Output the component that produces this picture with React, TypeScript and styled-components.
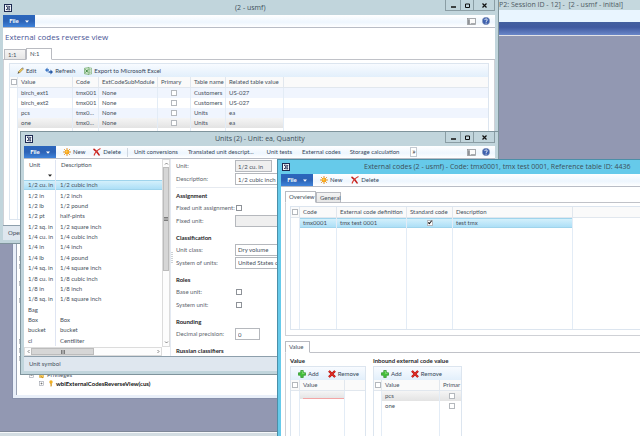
import React from "react";
import styled, { createGlobalStyle, css } from "styled-components";

const GlobalStyle = createGlobalStyle`
  *, *::before, *::after { box-sizing: border-box; }
  body { margin: 0; overflow: hidden; }
  body, button, input, select, table {
    font-family: Lato, "Open Sans", sans-serif;
    font-size: 6px;
    line-height: 10px;
    color: #47505c;
  }
  button, input, select { margin: 0; padding: 0; border: 0; background: none; border-radius: 0; }
  svg { display: block; flex: none; }
`;

const titleFont = css`
  font-family: "Open Sans", Lato, sans-serif;
  font-weight: 400;
`;

/* ---------- desktop ---------- */

const Desktop = styled.main`
  position: relative;
  display: flex;
  flex-direction: column;
  min-height: 100vh;
  overflow: hidden;
  background: #9298b2;
`;

const ShellTitle = styled.header`
  ${titleFont}
  height: 10px;
  padding-right: 17px;
  text-align: right;
  font-size: 7px;
  white-space: pre;
  color: #4c5a63;
  background: #c5d8de;
`;
const ShellAddress = styled.div`
  height: 12px;
  background: #e9f5ff;
`;
const ShellBand = styled.div`
  height: 14px;
  background: linear-gradient(#44609f, #415aa0 40%, #6a87c8);
  border-bottom: 1px solid #e3e3e6;
`;
const ShellSpace = styled.div`
  flex: 1;
`;
const ShellStatus = styled.footer`
  height: 5px;
  border-top: 1px solid #7e8798;
  background: linear-gradient(#f6f8fa, #f6f8fa 1px, #d3dde2 1px);
`;

/* ---------- windows ---------- */

type Place = { $left: number; $top: number; $width?: number; $height?: number };

const Frame = styled.section<Place & { $active?: boolean }>`
  position: absolute;
  left: ${(p) => p.$left}px;
  top: ${(p) => p.$top}px;
  ${(p) => (p.$width ? `width: ${p.$width}px;` : "right: -12px;")}
  ${(p) => (p.$height ? `height: ${p.$height}px;` : "bottom: -4px;")}
  display: flex;
  flex-direction: column;
  padding: 0 3px 3px;
  border: 1px solid ${(p) => (p.$active ? "#4b8fa8" : "#7f949c")};
  background: ${(p) => (p.$active ? "#66caea" : "#c1d5dc")};
`;

const Caption = styled.header<{ $height: number }>`
  display: flex;
  align-items: center;
  flex: none;
  height: ${(p) => p.$height}px;
  padding-left: 1px;
`;
const CaptionText = styled.h1<{ $start: number }>`
  ${titleFont}
  flex: 1;
  margin: 0;
  padding-left: ${(p) => p.$start}px;
  font-size: 7px;
  white-space: nowrap;
  color: #3d4f59;
`;
const CaptionButtons = styled.div`
  display: flex;
  align-self: flex-start;
  height: 11px;
  border: 1px solid #8a9da4;
  border-top: 0;
`;
const CaptionButton = styled.button<{ $width: number }>`
  display: flex;
  align-items: center;
  justify-content: center;
  width: ${(p) => p.$width}px;
  & + & {
    border-left: 1px solid #8a9da4;
  }
`;

const Client = styled.div`
  display: flex;
  flex-direction: column;
  flex: 1;
  min-height: 0;
  overflow: hidden;
  background: #fff;
`;

const MenuBar = styled.nav`
  display: flex;
  align-items: center;
  flex: none;
  height: 13px;
  padding-right: 5px;
  border-bottom: 1px solid #b9bdc6;
  background: linear-gradient(#fff, #eef6fe 60%, #fff);
`;
const FileButton = styled.button`
  display: flex;
  align-items: center;
  justify-content: center;
  gap: 6px;
  width: 32px;
  height: 12px;
  font-weight: 700;
  color: #fff;
  background: linear-gradient(#2b66bd, #2c63b6 50%, #3f83da);
`;
const Command = styled.button<{ $start: number }>`
  display: flex;
  align-items: center;
  gap: 2px;
  margin-left: ${(p) => p.$start}px;
  white-space: nowrap;
  color: #35465a;
`;
const Divider = styled.span`
  width: 1px;
  height: 9px;
  margin-left: 6px;
  background: #ced6e0;
`;
const Overflow = styled.button`
  display: flex;
  justify-content: center;
  width: 7px;
  height: 10px;
  margin-left: 11px;
  font-size: 8px;
  line-height: 6px;
  color: #222;
  border: 1px solid #c4cad2;
  background: #fff;
`;
const MenuEnd = styled.div`
  display: flex;
  align-items: center;
  gap: 6px;
  margin-left: auto;
`;

const StatusBar = styled.footer`
  flex: none;
  height: 15px;
  padding: 2px 5px;
  border-top: 1px solid #8d9fac;
  background: #dfe7ef;
`;

/* ---------- tabs ---------- */

const Heading = styled.h2`
  ${titleFont}
  flex: none;
  height: 20px;
  margin: 0;
  padding: 3px 2px;
  font-size: 8px;
  line-height: 12px;
  color: #4b5596;
`;
const TabList = styled.div<{ $inset?: number }>`
  display: flex;
  align-items: flex-end;
  flex: none;
  height: 12px;
  padding-left: ${(p) => p.$inset ?? 0}px;
  box-shadow: inset 0 -1px #c0c2c8;
`;
const Tab = styled.button<{ $on?: boolean; $width: number }>`
  width: ${(p) => p.$width}px;
  height: ${(p) => (p.$on ? 12 : 11)}px;
  padding-left: 3px;
  text-align: left;
  border: 1px solid #b9bbc1;
  ${(p) =>
    p.$on
      ? css`
          border-bottom-color: #fff;
          background: #fff;
        `
      : css`
          background: linear-gradient(#f4f4f4, #e6e6e6);
        `}
`;
const TabPanel = styled.div<{ $pad: string; $grow?: boolean; $closed?: boolean }>`
  display: flex;
  flex-direction: column;
  flex: ${(p) => (p.$grow ? "1" : "none")};
  min-height: 0;
  padding: ${(p) => p.$pad};
  border: 1px solid #cfd1d6;
  border-top: 0;
  border-bottom-width: ${(p) => (p.$closed ? 1 : 0)}px;
  overflow: hidden;
`;

/* ---------- data grids ---------- */

const ActionBar = styled.div<{ $pad: number; $gap: number }>`
  display: flex;
  align-items: center;
  flex: none;
  gap: ${(p) => p.$gap}px;
  height: 13px;
  padding-left: ${(p) => p.$pad}px;
  background: linear-gradient(#f8fbff, #e2effb);
`;
const Action = styled.button`
  display: flex;
  align-items: center;
  gap: 2px;
  white-space: nowrap;
  color: #35465a;
`;
const GridBox = styled.div`
  flex: none;
  border: 1px solid #dce5ef;
  overflow: hidden;
`;
const Table = styled.table<{ $height?: number }>`
  width: 100%;
  ${(p) => p.$height && `height: ${p.$height}px;`}
  table-layout: fixed;
  border-spacing: 0;
  border-collapse: separate;
`;
const Col = styled.col<{ $w?: number }>`
  ${(p) => p.$w && `width: ${p.$w}px;`}
`;
const Th = styled.th`
  height: 10px;
  padding: 0 0 0 3px;
  text-align: left;
  font-weight: 400;
  white-space: nowrap;
  overflow: hidden;
  border-right: 1px solid #e1e7ee;
  border-bottom: 1px solid #e1e7ee;
  background: #fafafa;
  &:last-child {
    border-right: 0;
  }
`;
const Td = styled.td<{ $tone?: "blue" | "grey" | "tint"; $center?: boolean }>`
  padding: 0 0 0 ${(p) => (p.$center ? 0 : 3)}px;
  text-align: ${(p) => (p.$center ? "center" : "left")};
  white-space: nowrap;
  overflow: hidden;
  text-overflow: ellipsis;
  border-right: 1px solid #e3ecf6;
  &:last-child {
    border-right: 0;
  }
  ${(p) => p.$tone === "tint" && "background: #f0f5fe;"}
  ${(p) => p.$tone === "grey" && "background: linear-gradient(#f5f5f5, #e3e3e3);"}
  ${(p) =>
    p.$tone === "blue" &&
    "background: linear-gradient(#d8f2fc, #a8ddf6); box-shadow: inset 0 1px #9fd4ec, inset 0 -1px #9fd4ec;"}
`;
const Rest = styled(Td)<{ $h: number }>`
  height: ${(p) => p.$h}px;
`;
const Check = styled.input.attrs({ type: "checkbox" })`
  appearance: none;
  display: block;
  width: 6px;
  height: 6px;
  margin: 0 auto;
  border: 1px solid #b4b8bd;
  background: #fff;
  &:checked {
    position: relative;
  }
  &:checked::after {
    content: "";
    position: absolute;
    left: 1px;
    top: -1px;
    width: 2px;
    height: 4px;
    border: solid #111;
    border-width: 0 1px 1px 0;
    transform: rotate(40deg);
  }
`;
const CheckTh = styled(Th)`
  padding: 0 1px;
`;
const CellInput = styled.input`
  display: block;
  width: 41px;
  height: 8px;
  border-bottom: 1px solid #f3a5a5;
`;

/* ---------- units window ---------- */

const Split = styled.div`
  display: flex;
  flex: 1;
  min-height: 0;
`;
const ListPane = styled.div`
  display: grid;
  grid-template-columns: 138px 8px;
  grid-template-rows: 1fr 9px;
  overflow: hidden;
`;
const ListArea = styled.div`
  padding-top: 1px;
  overflow: hidden;
`;
const ListTable = styled(Table)`
  th {
    padding-left: 5px;
    background: #fff;
    border-bottom: 0;
  }
  td,
  th {
    border-color: #dfe5f2;
  }
  td {
    padding-left: 4px;
  }
`;
const FilterTd = styled(Td)`
  height: 10px;
  button {
    display: block;
    margin-left: 20px;
  }
`;
const Scroll = styled.div<{ $across?: boolean }>`
  display: flex;
  flex-direction: ${(p) => (p.$across ? "row" : "column")};
  border: 1px solid #dcdcdc;
  background: #fdfdfd;
`;
const ScrollButton = styled.button`
  display: flex;
  align-items: center;
  justify-content: center;
  flex: none;
  min-width: 6px;
  min-height: 7px;
`;
const Thumb = styled.div<{ $share: number }>`
  display: flex;
  align-items: center;
  justify-content: center;
  flex: ${(p) => p.$share};
  border: 1px solid #bcbcbc;
  background: #d6d6d6;
`;
const Track = styled.div<{ $share: number }>`
  flex: ${(p) => p.$share};
`;
const Splitter = styled.div`
  display: flex;
  align-items: center;
  width: 3px;
  border-left: 1px solid #e3e9f2;
`;
const Form = styled.form`
  display: flex;
  flex-direction: column;
  flex: 1;
  gap: 1px;
  padding: 1px 3px 0;
  overflow: hidden;
`;
const FormRow = styled.div`
  display: grid;
  grid-template-columns: 59px auto;
  justify-content: start;
  align-items: center;
  height: 12px;
  flex: none;
  white-space: nowrap;
  color: #5e656e;
  input[type="checkbox"] {
    margin: 0 1px;
    border-color: #8e9298;
  }
`;
const Rule = styled.hr`
  flex: none;
  width: 100%;
  height: 1px;
  margin: 1px 0 0;
  border: 0;
  background: #e6eaf0;
`;
const FormTitle = styled.h3<{ $first?: boolean }>`
  flex: none;
  margin: ${(p) => (p.$first ? 2 : 5)}px 0 0;
  font-size: 6px;
  font-weight: 700;
  line-height: 10px;
  color: #1e1e28;
`;
const fieldLook = css<{ $w: number; $off?: boolean }>`
  width: ${(p) => p.$w}px;
  height: 12px;
  padding: 0 2px;
  border: 1px solid #b5b8bd;
  background: ${(p) => (p.$off ? "#efefef" : "#fff")};
`;
const Field = styled.input<{ $w: number; $off?: boolean }>`
  ${fieldLook}
`;
const Choice = styled.select<{ $w: number; $off?: boolean }>`
  appearance: none;
  ${fieldLook}
`;

/* ---------- codes window ---------- */

const CodesBody = styled.div`
  display: flex;
  flex-direction: column;
  flex: 1;
  min-height: 0;
  padding: 4px 0 0 4px;
`;
const ValueTabs = styled.div`
  display: flex;
  flex-direction: column;
  flex: 1;
  margin-top: 5px;
`;
const Columns = styled.div`
  display: flex;
  gap: 7px;
`;
const ValueTitle = styled.h3`
  margin: 0;
  font-size: 6px;
  font-weight: 700;
  line-height: 10px;
  white-space: nowrap;
  color: #1e1e28;
`;
const ValueGroup = styled.section<{ $w: number }>`
  width: ${(p) => p.$w}px;
`;

/* ---------- object tree ---------- */

const TreeFrame = styled.section<Place>`
  position: absolute;
  left: ${(p) => p.$left}px;
  top: ${(p) => p.$top}px;
  width: ${(p) => p.$width}px;
  height: ${(p) => p.$height}px;
  display: flex;
  padding: 3px;
  border: 1px solid #8790ab;
  background: #e9eff9;
`;
const Tree = styled.ul`
  display: flex;
  flex-direction: column;
  flex: 1;
  margin: 0;
  padding: 28px 0 7px 2px;
  list-style: none;
  background: #fff;
  border-left: 1px solid #9aa3b5;
`;
const TreeRow = styled.li<{ $depth: number; $bold?: boolean }>`
  display: flex;
  align-items: center;
  gap: 5px;
  flex: 1;
  min-height: 0;
  padding-left: ${(p) => p.$depth * 10}px;
  line-height: 8px;
  font-weight: ${(p) => (p.$bold ? 700 : 400)};
  color: ${(p) => (p.$bold ? "#111" : "#47505c")};
`;
const TreeLabel = styled.span`
  display: flex;
  align-items: center;
  gap: 3px;
`;

/* ---------- icons ---------- */

const AppIcon = () => (
  <svg width="8" height="8" viewBox="0 0 16 16">
    <rect x="1" y="1" width="14" height="14" fill="#f3f6fa" stroke="#1d2a52" strokeWidth="2" />
    <path d="M4 4l8 1-3 3 3 4-7-1M4 4l4 4-4 4M9 8h3" fill="none" stroke="#1d2a52" strokeWidth="1.6" />
  </svg>
);
const SunIcon = () => (
  <svg width="8" height="8" viewBox="0 0 16 16">
    <path d="M8 0v16M0 8h16M2.3 2.3l11.4 11.4M13.7 2.3L2.3 13.7" stroke="#e08a1e" strokeWidth="1.8" />
    <circle cx="8" cy="8" r="4.6" fill="#f8a81c" />
    <circle cx="7" cy="7" r="2" fill="#fbcb5a" />
  </svg>
);
const DeleteIcon = () => (
  <svg width="8" height="8" viewBox="0 0 16 16">
    <path d="M1 2c5 3 9 7 12 13" stroke="#c3201c" strokeWidth="3" fill="none" />
    <path d="M15 1C9 4 4 9 2 15" stroke="#d9362d" strokeWidth="2.2" fill="none" />
  </svg>
);
const RemoveIcon = () => (
  <svg width="8" height="8" viewBox="0 0 16 16">
    <path d="M2 2l12 12M14 2L2 14" stroke="#9d1512" strokeWidth="4.6" />
    <path d="M2 2l12 12M14 2L2 14" stroke="#e02a24" strokeWidth="3" />
  </svg>
);
const AddIcon = () => (
  <svg width="8" height="8" viewBox="0 0 16 16">
    <path d="M5.5 1h5v4.5H15v5h-4.5V15h-5v-4.5H1v-5h4.5z" fill="#46c23c" stroke="#2a8f26" strokeWidth="1.4" />
    <path d="M7 3h2v4h4" fill="none" stroke="#9be88f" strokeWidth="1.2" />
  </svg>
);
const PencilIcon = () => (
  <svg width="7" height="7" viewBox="0 0 14 14">
    <path d="M2.5 9.5L10 2l2.4 2.4L5 12z" fill="#e9c458" stroke="#94762c" />
    <path d="M2.5 9.5L1 13.5 5 12z" fill="#4a4335" />
    <path d="M10 2l1.5-1.500 2 2-1.100 1.900z" fill="#8a8f98" />
  </svg>
);
const RefreshIcon = () => (
  <svg width="8" height="8" viewBox="0 0 16 16">
    <path d="M0 6l5-5v3.500h3v3H5V11z" fill="#3f78c6" />
    <path d="M16 10l-5 5v-3.500H7v-3h4V5z" fill="#2458a6" />
  </svg>
);
const ExcelIcon = () => (
  <svg width="8" height="8" viewBox="0 0 16 16">
    <path d="M8 2h7v12H8z" fill="#fff" stroke="#6da468" strokeWidth="1.2" />
    <path d="M9 5h5M9 8h5M9 11h5M12 3v10" stroke="#8fbf8a" />
    <path d="M1 2.5L10 1v14L1 13.5z" fill="#d5ead0" stroke="#3f8b3a" />
    <path d="M3 5l5 6M8 5l-5 6" stroke="#2e7d32" strokeWidth="1.8" />
  </svg>
);
const PanelIcon = () => (
  <svg width="9" height="7" viewBox="0 0 18 14">
    <rect x="1" y="1" width="16" height="12" fill="#fafafa" stroke="#8b8e93" strokeWidth="1.5" />
    <path d="M2 2.5h4v10H2z" fill="#8f9297" />
    <path d="M7 11h9" stroke="#a9acb0" strokeWidth="2" />
    <path d="M6.5 2v10" stroke="#fff" />
  </svg>
);
const HelpIcon = () => (
  <svg width="8" height="8" viewBox="0 0 16 16">
    <circle cx="8" cy="8" r="7.4" fill="#3b5fae" stroke="#9aa4b8" />
    <path d="M5.600 6.200c0-3.200 5-3.200 5-.2 0 1.900-2.500 1.800-2.500 3.800" fill="none" stroke="#fff" strokeWidth="1.8" />
    <circle cx="8.1" cy="12.2" r="1.1" fill="#fff" />
  </svg>
);
const Caret = ({ color = "#fff" }: { color?: string }) => (
  <svg width="4" height="3" viewBox="0 0 8 6">
    <path d="M0 1h8L4 5.5z" fill={color} />
  </svg>
);
const Chevron = ({ d }: { d: string }) => (
  <svg width="5" height="5" viewBox="0 0 10 10">
    <path d={d} fill="none" stroke="#666" strokeWidth="1.6" />
  </svg>
);
const Grip = ({ d }: { d: string }) => (
  <svg width="4" height="4" viewBox="0 0 8 8">
    <path d={d} stroke="#555" strokeWidth="1.4" />
  </svg>
);
const SplitterDots = () => (
  <svg width="2" height="12" viewBox="0 0 2 12">
    <path d="M1 0v12" stroke="#9aa4ae" strokeDasharray="1 1" />
  </svg>
);
const Expander = ({ open }: { open?: boolean }) => (
  <svg width="5" height="5" viewBox="0 0 10 10">
    <rect x="1" y="1" width="8" height="8" fill="#fff" stroke="#9a9fa8" strokeWidth="1.2" />
    <path d={open ? "M3 5h4" : "M3 5h4M5 3v4"} stroke="#444" />
  </svg>
);
const KeyIcon = () => (
  <svg width="4" height="7" viewBox="0 0 8 14">
    <circle cx="4" cy="4" r="3.4" fill="#f2b01e" />
    <path d="M4 6v7M4 10h2" stroke="#d08f12" strokeWidth="2" />
  </svg>
);
const KeysIcon = () => (
  <svg width="5" height="7" viewBox="0 0 10 14">
    <path d="M1 2h4l1 2h3v7H1z" fill="#f4cc62" stroke="#cf9b2a" />
    <path d="M3 8l5 4" stroke="#d08f12" strokeWidth="2" />
  </svg>
);

/* ---------- shared pieces ---------- */

const WindowControls = () => (
  <CaptionButtons>
    <CaptionButton $width={14} aria-label="Minimize">
      <svg width="5" height="5" viewBox="0 0 5 5">
        <path d="M0 4h5" stroke="#111" strokeWidth="1.5" />
      </svg>
    </CaptionButton>
    <CaptionButton $width={13} aria-label="Maximize">
      <svg width="5" height="5" viewBox="0 0 5 5">
        <path d="M.5 1h4v3.5h-4z" stroke="#111" fill="none" />
      </svg>
    </CaptionButton>
    <CaptionButton $width={21} aria-label="Close">
      <svg width="5" height="5" viewBox="0 0 5 5">
        <path d="M.5.5l4 4M4.5.5l-4 4" stroke="#111" strokeWidth="1.2" />
      </svg>
    </CaptionButton>
  </CaptionButtons>
);

const FileMenu = () => (
  <FileButton>
    File <Caret />
  </FileButton>
);

const MenuTools = () => (
  <MenuEnd>
    <button aria-label="Layout">
      <PanelIcon />
    </button>
    <button aria-label="Help">
      <HelpIcon />
    </button>
  </MenuEnd>
);

const AddRemove = () => (
  <ActionBar $pad={7} $gap={9}>
    <Action>
      <AddIcon />
      Add
    </Action>
    <Action>
      <RemoveIcon />
      Remove
    </Action>
  </ActionBar>
);

/* ---------- data ---------- */

const mappings = [
  { value: "birch_ext1", code: "tmx001", table: "Customers", related: "US-027" },
  { value: "birch_ext2", code: "tmx001", table: "Customers", related: "US-027" },
  { value: "pcs", code: "tmx0...", table: "Units", related: "ea" },
  { value: "one", code: "tmx0...", table: "Units", related: "ea" },
];

const units = [
  ["1/2 cu. in", "1/2 cubic inch"],
  ["1/2 in", "1/2 inch"],
  ["1/2 lb", "1/2 pound"],
  ["1/2 pt", "half-pints"],
  ["1/2 sq. in", "1/2 square inch"],
  ["1/4 cu. in", "1/4 cubic inch"],
  ["1/4 in", "1/4 inch"],
  ["1/4 lb", "1/4 pound"],
  ["1/4 sq. in", "1/4 square inch"],
  ["1/8 cu. in", "1/8 cubic inch"],
  ["1/8 in", "1/8 inch"],
  ["1/8 sq. in", "1/8 square inch"],
  ["Bag", ""],
  ["Box", "Box"],
  ["bucket", "bucket"],
  ["cl", "Centiliter"],
];

const treeNodes = [1, 1, 0, 1, 0, 1, 0, 0, 0, 0, 1, 1, 1, 0];

/* ---------- windows ---------- */

const ObjectTree = () => (
  <TreeFrame $left={12} $top={222} $width={320} $height={177}>
    <Tree>
      {treeNodes.map((node, i) => (
        <TreeRow key={i} $depth={0}>
          {node ? <Expander /> : null}
        </TreeRow>
      ))}
      <TreeRow $depth={1}>
        <Expander open />
        <TreeLabel>
          <KeysIcon />
          Privileges
        </TreeLabel>
      </TreeRow>
      <TreeRow $depth={2} $bold>
        <Expander />
        <TreeLabel>
          <KeyIcon />
          wblExternalCodesReverseView(cus)
        </TreeLabel>
      </TreeRow>
    </Tree>
  </TreeFrame>
);

const ReverseView = () => (
  <Frame $left={-1} $top={-1} $width={500} $height={245}>
    <Caption $height={15}>
      <AppIcon />
      <CaptionText $start={223}>(2 - usmf)</CaptionText>
      <WindowControls />
    </Caption>
    <Client>
      <MenuBar>
        <FileMenu />
        <MenuTools />
      </MenuBar>
      <Heading>External codes reverse view</Heading>
      <TabList $inset={1}>
        <Tab $width={22}>1:1</Tab>
        <Tab $width={26} $on>
          N:1
        </Tab>
      </TabList>
      <TabPanel $pad="3px 5px 4px" $grow>
        <GridBox>
          <ActionBar $pad={7} $gap={9}>
            <Action>
              <PencilIcon />
              Edit
            </Action>
            <Action>
              <RefreshIcon />
              Refresh
            </Action>
            <Action>
              <ExcelIcon />
              Export to Microsoft Excel
            </Action>
          </ActionBar>
          <Table>
            <colgroup>
              <Col $w={8} />
              <Col $w={55} />
              <Col $w={26} />
              <Col $w={59} />
              <Col $w={33} />
              <Col $w={35} />
              <Col $w={58} />
              <Col />
            </colgroup>
            <thead>
              <tr>
                <CheckTh>
                  <Check aria-label="Select all" />
                </CheckTh>
                <Th>Value</Th>
                <Th>Code</Th>
                <Th>ExtCodeSubModule</Th>
                <Th>Primary</Th>
                <Th>Table name</Th>
                <Th>Related table value</Th>
                <Th />
              </tr>
            </thead>
            <tbody>
              {mappings.map((row, i) => {
                const tone = i === 3 ? "grey" : i % 2 ? undefined : "tint";
                return (
                  <tr key={row.value}>
                    <Td />
                    <Td $tone={tone}>{row.value}</Td>
                    <Td $tone={tone}>{row.code}</Td>
                    <Td $tone={tone}>None</Td>
                    <Td $tone={tone} $center>
                      <Check aria-label={`Primary ${row.value}`} />
                    </Td>
                    <Td $tone={tone}>{row.table}</Td>
                    <Td $tone={tone}>{row.related}</Td>
                    <Td $tone={i === 3 ? undefined : tone} />
                  </tr>
                );
              })}
              <tr>
                {mappings.concat(mappings).map((_, i) => (
                  <Rest key={i} $h={91} />
                ))}
              </tr>
            </tbody>
          </Table>
        </GridBox>
      </TabPanel>
      <StatusBar>Open</StatusBar>
    </Client>
  </Frame>
);

const UnitsWindow = () => (
  <Frame $left={20} $top={131} $width={479} $height={244}>
    <Caption $height={14}>
      <AppIcon />
      <CaptionText $start={182}>Units (2) - Unit: ea, Quantity</CaptionText>
      <WindowControls />
    </Caption>
    <Client>
      <MenuBar>
        <FileMenu />
        <Command $start={7}>
          <SunIcon />
          New
        </Command>
        <Command $start={8}>
          <DeleteIcon />
          Delete
        </Command>
        <Divider />
        <Command $start={6}>Unit conversions</Command>
        <Command $start={10}>Translated unit descript...</Command>
        <Command $start={13}>Unit tests</Command>
        <Command $start={10}>External codes</Command>
        <Command $start={9}>Storage calculation</Command>
        <Overflow aria-label="More commands">»</Overflow>
        <MenuTools />
      </MenuBar>
      <Split>
        <ListPane>
          <ListArea>
            <ListTable $height={186}>
              <colgroup>
                <Col $w={32} />
                <Col />
              </colgroup>
              <thead>
                <tr>
                  <Th>Unit</Th>
                  <Th>Description</Th>
                </tr>
                <tr>
                  <FilterTd>
                    <button aria-label="Filter units">
                      <Caret color="#222" />
                    </button>
                  </FilterTd>
                  <FilterTd />
                </tr>
              </thead>
              <tbody>
                {units.map(([unit, text], i) => (
                  <tr key={unit}>
                    <Td $tone={i ? undefined : "blue"}>{unit}</Td>
                    <Td $tone={i ? undefined : "blue"}>{text}</Td>
                  </tr>
                ))}
              </tbody>
            </ListTable>
          </ListArea>
          <Scroll>
            <ScrollButton aria-label="Scroll up">
              <Chevron d="M2 7l3-3 3 3" />
            </ScrollButton>
            <Thumb $share={3}>
              <Grip d="M0 1h8M0 4h8M0 7h8" />
            </Thumb>
            <Track $share={2} />
            <ScrollButton aria-label="Scroll down">
              <Chevron d="M2 3l3 3 3-3" />
            </ScrollButton>
          </Scroll>
          <Scroll $across>
            <ScrollButton aria-label="Scroll left">
              <Chevron d="M7 2L4 5l3 3" />
            </ScrollButton>
            <Thumb $share={1}>
              <Grip d="M1 0v8M4 0v8M7 0v8" />
            </Thumb>
            <Track $share={1} />
            <ScrollButton aria-label="Scroll right">
              <Chevron d="M3 2l3 3-3 3" />
            </ScrollButton>
          </Scroll>
        </ListPane>
        <Splitter>
          <SplitterDots />
        </Splitter>
        <Form>
          <FormRow>
            <label htmlFor="unit">Unit:</label>
            <Field id="unit" $w={37} $off readOnly defaultValue="1/2 cu. in" />
          </FormRow>
          <FormRow>
            <label htmlFor="description">Description:</label>
            <Field id="description" $w={90} defaultValue="1/2 cubic inch" />
          </FormRow>
          <Rule />
          <FormTitle $first>Assignment</FormTitle>
          <FormRow>
            <label htmlFor="fixed">Fixed unit assignment:</label>
            <Check id="fixed" />
          </FormRow>
          <FormRow>
            <label htmlFor="fixed-unit">Fixed unit:</label>
            <Field id="fixed-unit" $w={90} $off readOnly />
          </FormRow>
          <FormTitle>Classification</FormTitle>
          <FormRow>
            <label htmlFor="class">Unit class:</label>
            <Choice id="class" $w={90}>
              <option>Dry volume</option>
            </Choice>
          </FormRow>
          <FormRow>
            <label htmlFor="system">System of units:</label>
            <Choice id="system" $w={90}>
              <option>United States customary units</option>
            </Choice>
          </FormRow>
          <FormTitle>Roles</FormTitle>
          <FormRow>
            <label htmlFor="base-unit">Base unit:</label>
            <Check id="base-unit" />
          </FormRow>
          <FormRow>
            <label htmlFor="system-unit">System unit:</label>
            <Check id="system-unit" />
          </FormRow>
          <FormTitle>Rounding</FormTitle>
          <FormRow>
            <label htmlFor="precision">Decimal precision:</label>
            <Field id="precision" $w={25} defaultValue="0" />
          </FormRow>
          <FormTitle>Russian classifiers</FormTitle>
        </Form>
      </Split>
      <StatusBar>Unit symbol</StatusBar>
    </Client>
  </Frame>
);

const CodesWindow = () => (
  <Frame $left={277} $top={159} $active>
    <Caption $height={14}>
      <AppIcon />
      <CaptionText $start={74}>
        External codes (2 - usmf) - Code: tmx0001, tmx test 0001, Reference table ID: 4436
      </CaptionText>
    </Caption>
    <Client>
      <MenuBar>
        <FileMenu />
        <Command $start={7}>
          <SunIcon />
          New
        </Command>
        <Command $start={9}>
          <DeleteIcon />
          Delete
        </Command>
      </MenuBar>
      <CodesBody>
        <TabList>
          <Tab $width={31} $on>
            Overview
          </Tab>
          <Tab $width={25}>General</Tab>
        </TabList>
        <TabPanel $pad="3px 0 5px 4px" $closed>
          <GridBox>
            <Table>
              <colgroup>
                <Col $w={9} />
                <Col $w={37} />
                <Col $w={70} />
                <Col $w={46} />
                <Col $w={120} />
                <Col />
              </colgroup>
              <thead>
                <tr>
                  <CheckTh>
                    <Check aria-label="Select all codes" />
                  </CheckTh>
                  <Th>Code</Th>
                  <Th>External code definition</Th>
                  <Th>Standard code</Th>
                  <Th>Description</Th>
                  <Th />
                </tr>
              </thead>
              <tbody>
                <tr>
                  <Td />
                  <Td $tone="blue">tmx0001</Td>
                  <Td $tone="blue">tmx test 0001</Td>
                  <Td $tone="blue" $center>
                    <Check aria-label="Standard code" defaultChecked />
                  </Td>
                  <Td $tone="blue">test tmx</Td>
                  <Td />
                </tr>
                <tr>
                  <Rest $h={101} />
                  <Rest $h={101} />
                  <Rest $h={101} />
                  <Rest $h={101} />
                  <Rest $h={101} />
                  <Rest $h={101} />
                </tr>
              </tbody>
            </Table>
          </GridBox>
        </TabPanel>
        <ValueTabs>
          <TabList>
            <Tab $width={25} $on>
              Value
            </Tab>
          </TabList>
          <TabPanel $pad="3px 4px 0" $grow>
            <Columns>
              <ValueGroup $w={76}>
                <ValueTitle>Value</ValueTitle>
                <GridBox>
                  <AddRemove />
                  <Table>
                    <colgroup>
                      <Col $w={9} />
                      <Col $w={45} />
                      <Col />
                    </colgroup>
                    <thead>
                      <tr>
                        <CheckTh>
                          <Check aria-label="Select all values" />
                        </CheckTh>
                        <Th>Value</Th>
                        <Th />
                      </tr>
                    </thead>
                    <tbody>
                      <tr>
                        <Td />
                        <Td $tone="grey">
                          <CellInput aria-label="Value" />
                        </Td>
                        <Td />
                      </tr>
                      <tr>
                        <Rest $h={60} />
                        <Rest $h={60} />
                        <Rest $h={60} />
                      </tr>
                    </tbody>
                  </Table>
                </GridBox>
              </ValueGroup>
              <ValueGroup $w={89}>
                <ValueTitle>Inbound external code value</ValueTitle>
                <GridBox>
                  <AddRemove />
                  <Table>
                    <colgroup>
                      <Col $w={8} />
                      <Col $w={58} />
                      <Col />
                    </colgroup>
                    <thead>
                      <tr>
                        <CheckTh>
                          <Check aria-label="Select all inbound values" />
                        </CheckTh>
                        <Th>Value</Th>
                        <Th>Primar</Th>
                      </tr>
                    </thead>
                    <tbody>
                      <tr>
                        <Td />
                        <Td $tone="grey">pcs</Td>
                        <Td $tone="grey">
                          <Check aria-label="Primary pcs" />
                        </Td>
                      </tr>
                      <tr>
                        <Td />
                        <Td>one</Td>
                        <Td>
                          <Check aria-label="Primary one" />
                        </Td>
                      </tr>
                      <tr>
                        <Rest $h={60} />
                        <Rest $h={60} />
                        <Rest $h={60} />
                      </tr>
                    </tbody>
                  </Table>
                </GridBox>
              </ValueGroup>
            </Columns>
          </TabPanel>
        </ValueTabs>
      </CodesBody>
    </Client>
  </Frame>
);

export default function App() {
  return (
    <>
      <GlobalStyle />
      <Desktop>
        <ShellTitle>{"P2: Session ID - 12] -  [2 - usmf - initial]"}</ShellTitle>
        <ShellAddress />
        <ShellBand />
        <ShellSpace />
        <ShellStatus />
        <ObjectTree />
        <ReverseView />
        <UnitsWindow />
        <CodesWindow />
      </Desktop>
    </>
  );
}
